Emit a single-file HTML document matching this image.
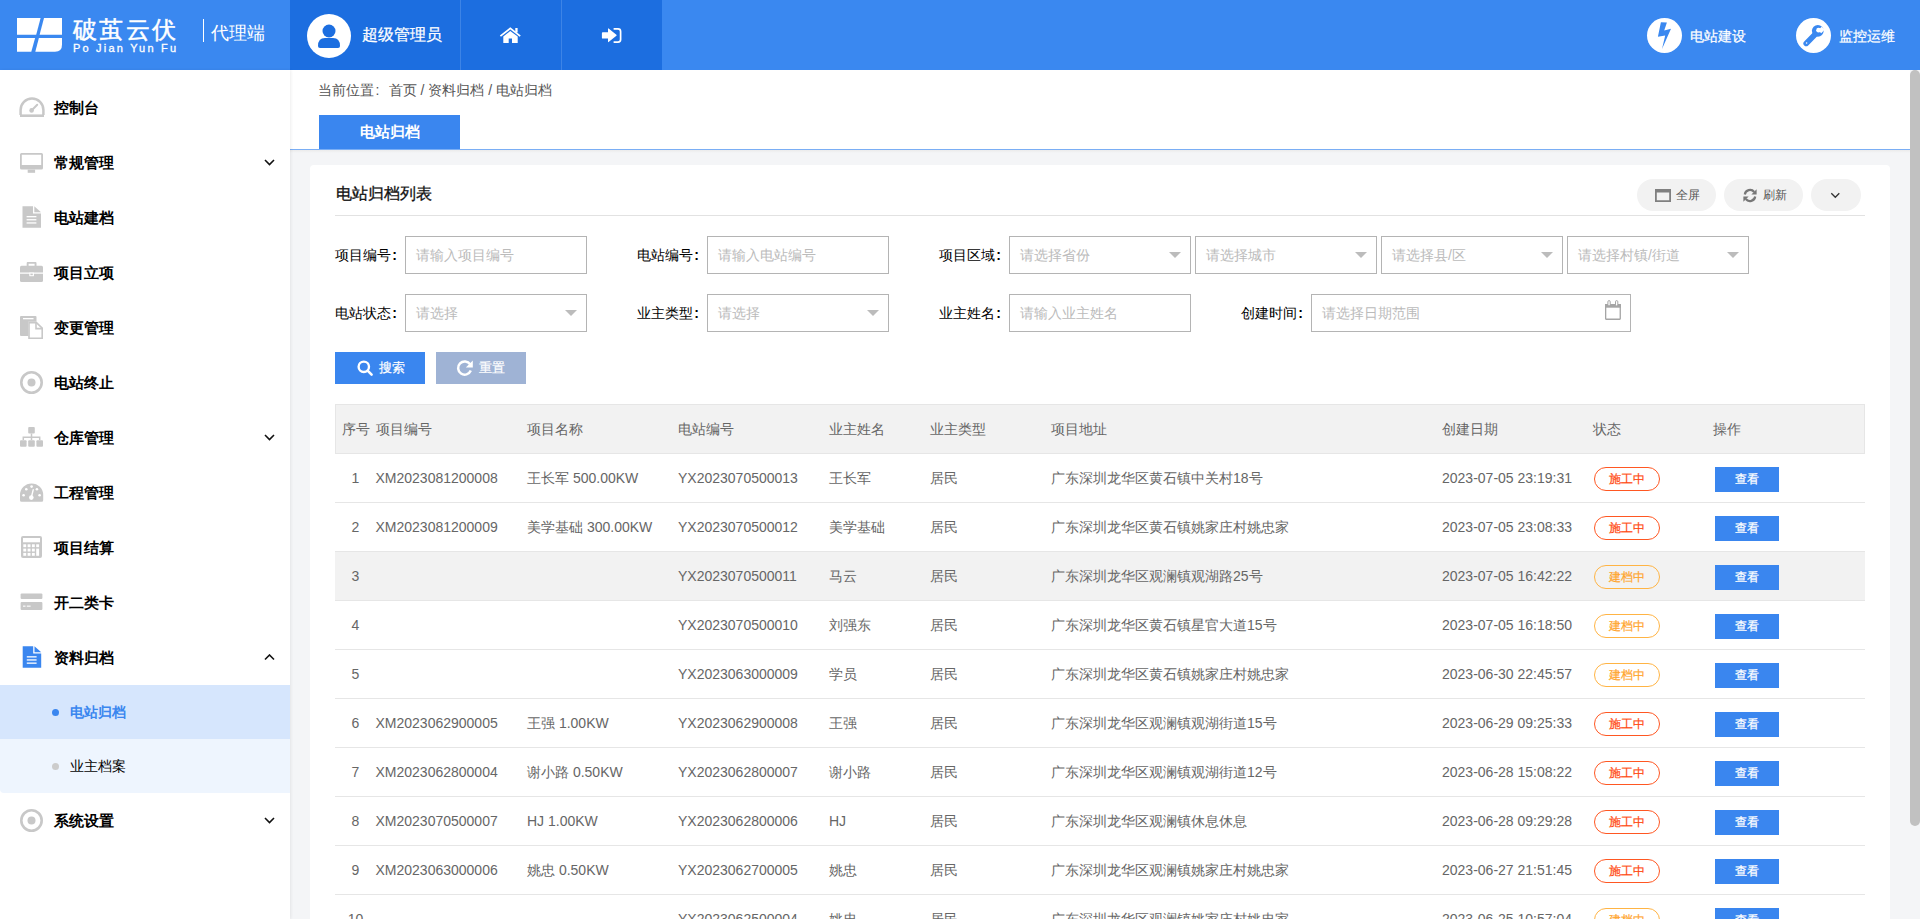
<!DOCTYPE html>
<html><head><meta charset="utf-8">
<style>
*{box-sizing:border-box;margin:0;padding:0}
html,body{width:1920px;height:919px;overflow:hidden;background:#fff;font-family:"Liberation Sans",sans-serif;color:#333}
.abs{position:absolute}
#hdr{position:absolute;left:0;top:0;width:1920px;height:70px;background:#3a88f0}
#user{position:absolute;left:290px;top:0;width:372px;height:70px;background:#1c6ee0}
.vsep{position:absolute;top:0;width:1px;height:70px;background:#3d84e6}
#side{position:absolute;left:0;top:70px;width:290px;height:849px;background:#fff;box-shadow:1px 0 3px rgba(0,0,0,0.07);z-index:2}
.mi{position:absolute;left:0;width:290px;height:55px}
.mi .t{position:absolute;left:53px;top:0;line-height:55px;font-size:15px;font-weight:bold;color:#111}
.mi svg.ic{position:absolute;left:19px}
.mi .chev{position:absolute;left:265px;top:25px}
#main{position:absolute;left:290px;top:70px;width:1630px;height:849px;background:#f4f5f7}
#topw{position:absolute;left:0;top:0;width:1620px;height:80px;background:#fff;border-bottom:1px solid #7aaef5}
.lbl{position:absolute;font-size:14px;color:#000;line-height:38px;height:38px}
.inp{position:absolute;height:38px;border:1px solid #b4b4b4;background:#fff;font-size:14px;color:#bbb;line-height:36px;padding-left:10px}
.inp .arr{position:absolute;right:9.5px;top:14.8px;width:0;height:0;border-left:6.5px solid transparent;border-right:6.5px solid transparent;border-top:6.2px solid #bcbcbc}
.th{position:absolute;top:0;line-height:49px;font-size:14px;color:#666}
.row{position:absolute;left:0;width:1530px;height:49px;border-bottom:1px solid #e6e6e6}
.row .c{position:absolute;top:0;line-height:48px;font-size:14px;color:#666;white-space:nowrap}
.badge{position:absolute;left:1259px;top:13px;width:66px;height:24px;border:1px solid #ff5722;border-radius:12px;color:#ff4a12;-webkit-text-stroke:0.2px currentColor;font-size:12px;line-height:22px;text-align:center}
.badge.y{border-color:#ffb444;color:#ffa52e}
.vbtn{position:absolute;left:1380px;top:13px;width:64px;height:25px;background:#3a86ef;color:#fff;-webkit-text-stroke:0.25px #fff;font-size:12px;line-height:25px;text-align:center}
.pill{position:absolute;top:14px;height:32px;border-radius:16px;background:#f2f2f2;font-size:12px;color:#555;line-height:32px}
</style></head><body>

<!-- HEADER -->
<div id="hdr">
  <svg class="abs" style="left:17px;top:18px" width="46" height="34" viewBox="0 0 46 34">
    <polygon points="0,0 23.6,0 19.2,16.7 0,16.7" fill="#fff"/>
    <polygon points="27,0 45,0 45,16.7 22.6,16.7" fill="#fff"/>
    <polygon points="0,20.1 18.1,20.1 14.3,33.7 0,33.7" fill="#fff"/>
    <path d="M21.9,20.1 L45,20.1 L45,26.7 Q45,33.7 38,33.7 L18.3,33.7 Z" fill="#fff"/>
  </svg>
  <div class="abs" style="left:73px;top:16px;font-size:24px;line-height:28px;color:#fff;letter-spacing:2.4px;font-weight:normal;-webkit-text-stroke:0.5px #fff">破茧云伏</div>
  <div class="abs" style="left:73px;top:43px;font-size:11px;line-height:11px;color:#fff;letter-spacing:2.2px;-webkit-text-stroke:0.3px #fff">Po Jian Yun Fu</div>
  <div class="abs" style="left:203px;top:19px;width:1px;height:23px;background:#fff"></div>
  <div class="abs" style="left:211px;top:21px;font-size:18px;line-height:24px;color:#fff">代理端</div>

  <div id="user">
    <div class="abs" style="left:17px;top:14px;width:44px;height:44px;border-radius:50%;background:#fff"></div>
    <svg class="abs" style="left:17px;top:14px" width="44" height="44" viewBox="0 0 44 44">
      <circle cx="22" cy="17" r="6.5" fill="#1c6ee0"/>
      <path d="M11,32 Q11,24 18,24 L26,24 Q33,24 33,32 Q33,34 31,34 L13,34 Q11,34 11,32Z" fill="#1c6ee0"/>
    </svg>
    <div class="abs" style="left:72px;top:24px;font-size:16px;line-height:22px;color:#fff;-webkit-text-stroke:0.25px #fff">超级管理员</div>
    <div class="vsep" style="left:170px"></div>
    <div class="vsep" style="left:271px"></div>
    <svg class="abs" style="left:209px;top:27px" width="22" height="17" viewBox="0 0 22 17">
      <path d="M1.4,9.1 L11.3,1.4 L21.2,9.1" fill="none" stroke="#fff" stroke-width="1.8"/>
      <rect x="16.3" y="1" width="2.3" height="4.5" fill="#fff"/>
      <path d="M4.3,9.6 L11.3,4 L18.7,9.6 V16 H13 V11.4 H9.7 V16 H4.3 Z" fill="#fff"/>
    </svg>
    <svg class="abs" style="left:311px;top:28px" width="21" height="16" viewBox="0 0 21 16">
      <path d="M1.8,4.3 H7 V0.8 Q7,0.1 7.6,0.5 L15.4,6.8 Q16,7.3 15.4,7.8 L7.6,14.1 Q7,14.5 7,13.8 V10.6 H1.8 Q0.9,10.6 0.9,9.7 V5.2 Q0.9,4.3 1.8,4.3 Z" fill="#fff"/>
      <path d="M12.6,0.95 H17 Q19.6,0.95 19.6,3.5 V11.6 Q19.6,14.15 17,14.15 H12.6" fill="none" stroke="#fff" stroke-width="1.7"/>
    </svg>
  </div>

  <div class="abs" style="left:1647px;top:18px;width:35px;height:35px;border-radius:50%;background:#fff"></div>
  <svg class="abs" style="left:1647px;top:18px" width="35" height="35" viewBox="0 0 35 35">
    <polygon points="13.9,4.2 19.9,4.4 17.2,12.4 24,10.8 15,30.9 18.2,17.4 10.9,18.7" fill="#3a88f0"/>
  </svg>
  <div class="abs" style="left:1690px;top:26px;font-size:14px;line-height:20px;color:#fff;-webkit-text-stroke:0.25px #fff">电站建设</div>

  <div class="abs" style="left:1796px;top:18px;width:35px;height:35px;border-radius:50%;background:#fff"></div>
  <svg class="abs" style="left:1796px;top:18px" width="35" height="35" viewBox="0 0 35 35">
    <path d="M10.2,25.4 L18.5,17.1" stroke="#3a88f0" stroke-width="5.6" stroke-linecap="round"/>
    <circle cx="21.8" cy="12.8" r="5.9" fill="#3a88f0"/>
    <path d="M22.2,12.2 L25.6,8.8 L28.6,11.8 L25.2,15.2 Z" fill="#fff"/>
    <circle cx="22.6" cy="12.2" r="2.4" fill="#fff"/>
    <circle cx="10.6" cy="25" r="0.8" fill="#fff"/>
  </svg>
  <div class="abs" style="left:1839px;top:26px;font-size:14px;line-height:20px;color:#fff;-webkit-text-stroke:0.25px #fff">监控运维</div>
</div>

<!-- SIDEBAR -->
<div id="side">
<svg class="abs" style="left:19px;top:27px" width="26" height="21" viewBox="0 0 26 21">
  <path d="M1.6,18 L1.6,13 A11.4,11.4 0 0 1 24.4,13 L24.4,18" fill="none" stroke="#c8c8c8" stroke-width="2.5"/>
  <rect x="1" y="17.4" width="24" height="2.6" fill="#c8c8c8"/>
  <path d="M12.8,13.2 L18.2,7.8" stroke="#c8c8c8" stroke-width="2" stroke-linecap="round"/>
  <circle cx="12.6" cy="13.4" r="2.3" fill="#c8c8c8"/></svg>
<div class="abs" style="left:54px;top:10px;line-height:55px;font-size:15px;font-weight:bold;color:#000">控制台</div>
<svg class="abs" style="left:20px;top:83px" width="23" height="20" viewBox="0 0 23 20">
  <path fill-rule="evenodd" d="M1.5,0 H21.5 Q23,0 23,1.5 V15 Q23,16.6 21.5,16.6 H1.5 Q0,16.6 0,15 V1.5 Q0,0 1.5,0 Z M1.8,1.8 V12 H21.2 V1.8 Z" fill="#c8c8c8"/>
  <rect x="7.7" y="16.6" width="7.4" height="3.2" fill="#c8c8c8"/></svg>
<div class="abs" style="left:54px;top:65px;line-height:55px;font-size:15px;font-weight:bold;color:#000">常规管理</div>
<svg class="abs" style="left:264px;top:89.0px" width="11" height="7" viewBox="0 0 11 7"><path d="M1,1 L5.5,5.5 L10,1" fill="none" stroke="#111" stroke-width="1.6"/></svg>
<svg class="abs" style="left:22px;top:136px" width="20" height="23" viewBox="0 0 20 23">
  <path d="M0.5,0.3 H11 V7.6 H19 V21.8 H0.5 Z" fill="#c8c8c8"/>
  <path d="M12.3,0.3 L19,6.3 H12.3 Z" fill="#c8c8c8"/>
  <rect x="4.6" y="10" width="9.8" height="1.3" fill="#fff"/>
  <rect x="4.6" y="13.1" width="9.8" height="1.3" fill="#fff"/>
  <rect x="4.6" y="16.3" width="9.8" height="1.3" fill="#fff"/></svg>
<div class="abs" style="left:54px;top:120px;line-height:55px;font-size:15px;font-weight:bold;color:#000">电站建档</div>
<svg class="abs" style="left:20px;top:192px" width="23" height="21" viewBox="0 0 23 21">
  <path fill-rule="evenodd" d="M6.7,4 V1 Q6.7,0 7.7,0 H15.5 Q16.5,0 16.5,1 V4 H14.6 V1.7 H8.6 V4 Z" fill="#c8c8c8"/>
  <path d="M1.5,3.8 H21.5 Q23,3.8 23,5.3 V10.6 H0 V5.3 Q0,3.8 1.5,3.8Z" fill="#c8c8c8"/>
  <path d="M0,11.8 H23 V18.5 Q23,20 21.5,20 H1.5 Q0,20 0,18.5 Z" fill="#c8c8c8"/>
  <rect x="9.3" y="10.6" width="4.6" height="3.6" fill="#fff"/>
  <rect x="10.4" y="11.6" width="2.4" height="1.6" fill="#c8c8c8"/></svg>
<div class="abs" style="left:54px;top:175px;line-height:55px;font-size:15px;font-weight:bold;color:#000">项目立项</div>
<svg class="abs" style="left:20px;top:246px" width="24" height="24" viewBox="0 0 24 24">
  <rect x="0" y="0" width="16.5" height="20" rx="1" fill="#c8c8c8"/>
  <rect x="3" y="2" width="10.5" height="1.3" fill="#fff"/>
  <path d="M8.2,5.8 H16.8 L23,11.8 V23 H8.2 Z" fill="#fff"/>
  <path d="M9,6.6 H16.4 L22.2,12.2 V22.2 H9 Z" fill="none" stroke="#c8c8c8" stroke-width="1.6"/>
  <path d="M16,6.6 V12.6 H22.2" fill="none" stroke="#c8c8c8" stroke-width="1.6"/></svg>
<div class="abs" style="left:54px;top:230px;line-height:55px;font-size:15px;font-weight:bold;color:#000">变更管理</div>
<svg class="abs" style="left:20px;top:301px" width="23" height="23" viewBox="0 0 23 23">
  <circle cx="11.5" cy="11.5" r="10.2" fill="none" stroke="#c8c8c8" stroke-width="2.6"/>
  <circle cx="11.5" cy="11.5" r="4" fill="#c8c8c8"/></svg>
<div class="abs" style="left:54px;top:285px;line-height:55px;font-size:15px;font-weight:bold;color:#000">电站终止</div>
<svg class="abs" style="left:20px;top:357px" width="23" height="20" viewBox="0 0 23 20">
  <rect x="8.2" y="0" width="6.6" height="6.6" rx="1" fill="#c8c8c8"/>
  <path d="M11.5,6.6 V13 M3.3,13 V10.2 H19.7 V13" fill="none" stroke="#c8c8c8" stroke-width="1.5"/>
  <rect x="0" y="13.3" width="6.6" height="6.5" rx="1" fill="#c8c8c8"/>
  <rect x="8.2" y="13.3" width="6.6" height="6.5" rx="1" fill="#c8c8c8"/>
  <rect x="16.4" y="13.3" width="6.6" height="6.5" rx="1" fill="#c8c8c8"/></svg>
<div class="abs" style="left:54px;top:340px;line-height:55px;font-size:15px;font-weight:bold;color:#000">仓库管理</div>
<svg class="abs" style="left:264px;top:364.0px" width="11" height="7" viewBox="0 0 11 7"><path d="M1,1 L5.5,5.5 L10,1" fill="none" stroke="#111" stroke-width="1.6"/></svg>
<svg class="abs" style="left:20px;top:413px" width="24" height="20" viewBox="0 0 24 20">
  <path d="M0,12 A11.6,11.6 0 0 1 23.2,12 V17.3 Q23.2,18.8 21.7,18.8 H1.5 Q0,18.8 0,17.3 Z" fill="#c8c8c8"/>
  <circle cx="3.6" cy="12.3" r="1.3" fill="#fff"/><circle cx="6.3" cy="6.2" r="1.3" fill="#fff"/>
  <circle cx="11.6" cy="3.6" r="1.3" fill="#fff"/><circle cx="16.9" cy="6.2" r="1.3" fill="#fff"/>
  <circle cx="19.6" cy="12.3" r="1.3" fill="#fff"/>
  <path d="M11.3,14.5 L13.2,6.8" stroke="#fff" stroke-width="1.4" stroke-linecap="round"/>
  <circle cx="11.3" cy="14.6" r="2.3" fill="#fff"/></svg>
<div class="abs" style="left:54px;top:395px;line-height:55px;font-size:15px;font-weight:bold;color:#000">工程管理</div>
<svg class="abs" style="left:21px;top:466px" width="22" height="23" viewBox="0 0 22 23">
  <rect x="0" y="0" width="21" height="22" rx="2" fill="#c8c8c8"/>
  <rect x="2" y="2" width="17" height="4.3" fill="#fff"/>
  <rect x="2.3" y="8.3" width="2.9" height="2.9" fill="#fff"/><rect x="6.6" y="8.3" width="2.9" height="2.9" fill="#fff"/><rect x="10.9" y="8.3" width="2.9" height="2.9" fill="#fff"/><rect x="2.3" y="12.6" width="2.9" height="2.9" fill="#fff"/><rect x="6.6" y="12.6" width="2.9" height="2.9" fill="#fff"/><rect x="10.9" y="12.6" width="2.9" height="2.9" fill="#fff"/><rect x="2.3" y="16.9" width="2.9" height="2.9" fill="#fff"/><rect x="6.6" y="16.9" width="2.9" height="2.9" fill="#fff"/><rect x="10.9" y="16.9" width="2.9" height="2.9" fill="#fff"/>
  <rect x="15.2" y="8.3" width="2.9" height="2.9" fill="#fff"/>
  <rect x="15.2" y="12.6" width="2.9" height="7.2" fill="#fff"/></svg>
<div class="abs" style="left:54px;top:450px;line-height:55px;font-size:15px;font-weight:bold;color:#000">项目结算</div>
<svg class="abs" style="left:20px;top:523px" width="23" height="18" viewBox="0 0 23 18">
  <rect x="0.6" y="0.5" width="21.8" height="5.6" rx="1" fill="#c8c8c8"/>
  <rect x="0.6" y="9" width="21.8" height="8" rx="1" fill="#c8c8c8"/>
  <rect x="3" y="12.6" width="2.5" height="1.1" fill="#fff"/>
  <rect x="6.8" y="12.6" width="3.8" height="1.1" fill="#fff"/></svg>
<div class="abs" style="left:54px;top:505px;line-height:55px;font-size:15px;font-weight:bold;color:#000">开二类卡</div>
<svg class="abs" style="left:22px;top:576px" width="20" height="23" viewBox="0 0 20 23">
  <path d="M0.7,0.3 H11.2 V7.6 H19.2 V21.8 H0.7 Z" fill="#3a86ef"/>
  <path d="M12.5,0.3 L19.2,6.3 H12.5 Z" fill="#3a86ef"/>
  <rect x="4.8" y="10.2" width="9.8" height="1.3" fill="#fff"/>
  <rect x="4.8" y="13.3" width="9.8" height="1.3" fill="#fff"/>
  <rect x="4.8" y="16.5" width="9.8" height="1.3" fill="#fff"/></svg>
<div class="abs" style="left:54px;top:560px;line-height:55px;font-size:15px;font-weight:bold;color:#000">资料归档</div>
<svg class="abs" style="left:264px;top:584.0px" width="11" height="7" viewBox="0 0 11 7"><path d="M1,5.5 L5.5,1 L10,5.5" fill="none" stroke="#111" stroke-width="1.6"/></svg>
<div class="abs" style="left:0;top:615px;width:290px;height:54px;background:#d6e6fd"></div>
<div class="abs" style="left:0;top:669px;width:290px;height:54px;background:#eef5fe;border-radius:0 0 0 4px"></div>
<div class="abs" style="left:52px;top:639px;width:7px;height:7px;border-radius:50%;background:#3a86ef"></div>
<div class="abs" style="left:70px;top:615px;line-height:54px;font-size:14px;font-weight:bold;color:#3a86ef">电站归档</div>
<div class="abs" style="left:52px;top:693px;width:7px;height:7px;border-radius:50%;background:#ccc"></div>
<div class="abs" style="left:70px;top:669px;line-height:54px;font-size:14px;color:#000">业主档案</div>
<svg class="abs" style="left:20px;top:739px" width="23" height="23" viewBox="0 0 23 23">
  <circle cx="11.5" cy="11.5" r="10.2" fill="none" stroke="#c8c8c8" stroke-width="2.6"/>
  <circle cx="11.5" cy="11.5" r="4" fill="#c8c8c8"/></svg>
<div class="abs" style="left:54px;top:723px;line-height:55px;font-size:15px;font-weight:bold;color:#000">系统设置</div>
<svg class="abs" style="left:264px;top:747px" width="11" height="7" viewBox="0 0 11 7"><path d="M1,1 L5.5,5.5 L10,1" fill="none" stroke="#111" stroke-width="1.6"/></svg>
</div>

<!-- MAIN -->
<div id="main">
<div id="topw"></div>
<div class="abs" style="left:0;top:80px;width:1620px;height:3px;background:linear-gradient(#ebebeb,#f4f5f7)"></div>
<div class="abs" style="left:28px;top:10px;font-size:14px;line-height:20px;color:#555">当前位置<span style="margin:0 9.2px 0 1.6px">:</span>首页 / 资料归档 / 电站归档</div>
<div class="abs" style="left:29px;top:45px;width:141px;height:34px;background:#3a86ef;color:#fff;font-size:15px;font-weight:bold;text-align:center;line-height:34px">电站归档</div>
<div class="abs" style="left:20px;top:95px;width:1580px;height:900px;background:#fff;border-radius:4px"><div class="abs" style="left:26px;top:18px;font-size:16px;line-height:22px;color:#111;-webkit-text-stroke:0.3px #111">电站归档列表</div>
<div class="abs" style="left:25px;top:50px;width:1530px;height:1px;background:#e2e2e2"></div>
<div class="pill" style="left:1327px;width:79px"><svg class="abs" style="left:18px;top:10px" width="16" height="13" viewBox="0 0 16 13"><path fill-rule="evenodd" d="M0,0 H16 V13 H0 Z M1.8,3.4 V11.2 H14.2 V3.4 Z" fill="#808080"/></svg><span class="abs" style="left:39px;top:0">全屏</span></div>
<div class="pill" style="left:1414px;width:79px"><svg class="abs" style="left:19px;top:9px" width="14" height="15" viewBox="0 0 14 15"><path d="M1.8,6.5 A5.3,5.3 0 0 1 11.2,4" fill="none" stroke="#777" stroke-width="2.2"/><path d="M13.6,1.2 V6.4 H8.4 Z" fill="#777"/><path d="M12.2,8.5 A5.3,5.3 0 0 1 2.8,11" fill="none" stroke="#777" stroke-width="2.2"/><path d="M0.4,13.8 V8.6 H5.6 Z" fill="#777"/></svg><span class="abs" style="left:39px;top:0">刷新</span></div>
<div class="pill" style="left:1501px;width:50px"><svg class="abs" style="left:19px;top:13px" width="11" height="7" viewBox="0 0 11 7"><path d="M1.3,1.3 L5.3,5.3 L9.3,1.3" fill="none" stroke="#333" stroke-width="1.3"/></svg></div>
<div class="lbl" style="left:25px;top:71px">项目编号<b style="margin-left:1.3px">:</b></div>
<div class="inp" style="left:95px;top:71px;width:182px">请输入项目编号</div>
<div class="lbl" style="left:327px;top:71px">电站编号<b style="margin-left:1.3px">:</b></div>
<div class="inp" style="left:397px;top:71px;width:182px">请输入电站编号</div>
<div class="lbl" style="left:629px;top:71px">项目区域<b style="margin-left:1.3px">:</b></div>
<div class="inp" style="left:699px;top:71px;width:182px">请选择省份<span class="arr"></span></div>
<div class="inp" style="left:885px;top:71px;width:182px">请选择城市<span class="arr"></span></div>
<div class="inp" style="left:1071px;top:71px;width:182px">请选择县/区<span class="arr"></span></div>
<div class="inp" style="left:1257px;top:71px;width:182px">请选择村镇/街道<span class="arr"></span></div>
<div class="lbl" style="left:25px;top:129px">电站状态<b style="margin-left:1.3px">:</b></div>
<div class="inp" style="left:95px;top:129px;width:182px">请选择<span class="arr"></span></div>
<div class="lbl" style="left:327px;top:129px">业主类型<b style="margin-left:1.3px">:</b></div>
<div class="inp" style="left:397px;top:129px;width:182px">请选择<span class="arr"></span></div>
<div class="lbl" style="left:629px;top:129px">业主姓名<b style="margin-left:1.3px">:</b></div>
<div class="inp" style="left:699px;top:129px;width:182px">请输入业主姓名</div>
<div class="lbl" style="left:931px;top:129px">创建时间<b style="margin-left:1.3px">:</b></div>
<div class="inp" style="left:1001px;top:129px;width:320px">请选择日期范围<svg class="abs" style="left:292px;top:4px" width="18" height="22" viewBox="0 0 18 22"><rect x="1.65" y="5.65" width="14.6" height="14.6" rx="0.5" fill="none" stroke="#a5a5a5" stroke-width="1.3"/><rect x="1" y="5" width="15.9" height="3.7" fill="#a5a5a5"/><rect x="3.9" y="1.6" width="2.3" height="5.4" rx="1.15" fill="#fff" stroke="#a5a5a5" stroke-width="1"/><rect x="11.5" y="1.6" width="2.3" height="5.4" rx="1.15" fill="#fff" stroke="#a5a5a5" stroke-width="1"/></svg></div>
<div class="abs" style="left:25px;top:187px;width:90px;height:32px;background:#3a86ef;color:#fff;font-size:13px;line-height:31px"><svg class="abs" style="left:22px;top:7.5px" width="17" height="17" viewBox="0 0 17 17"><circle cx="6.8" cy="6.8" r="5.2" fill="none" stroke="#fff" stroke-width="2.4"/><path d="M10.6,10.6 L14.6,14.6" stroke="#fff" stroke-width="2.6" stroke-linecap="round"/></svg><span class="abs" style="left:44px;top:0;-webkit-text-stroke:0.2px #fff">搜索</span></div>
<div class="abs" style="left:126px;top:187px;width:90px;height:32px;background:#9fb3d5;color:#fff;font-size:13px;line-height:31px"><svg class="abs" style="left:20px;top:7px" width="18" height="18" viewBox="0 0 18 18"><path d="M14.2,5.4 A6.6,6.6 0 1 0 14.8,11.6" fill="none" stroke="#fff" stroke-width="2.5"/><path d="M16.8,1.4 V8.4 H9.8 Z" fill="#fff"/></svg><span class="abs" style="left:43px;top:0;-webkit-text-stroke:0.2px #fff">重置</span></div>
<div class="abs" style="left:25px;top:239px;width:1530px;height:700px"><div class="abs" style="left:0;top:0;width:1530px;height:50px;background:#f2f2f2;border:1px solid #e6e6e6"></div>
<div class="th" style="left:0;width:41px;text-align:center;line-height:50px">序号</div>
<div class="th" style="left:40.5px;line-height:50px">项目编号</div>
<div class="th" style="left:192px;line-height:50px">项目名称</div>
<div class="th" style="left:343px;line-height:50px">电站编号</div>
<div class="th" style="left:494px;line-height:50px">业主姓名</div>
<div class="th" style="left:595px;line-height:50px">业主类型</div>
<div class="th" style="left:716px;line-height:50px">项目地址</div>
<div class="th" style="left:1107px;line-height:50px">创建日期</div>
<div class="th" style="left:1258px;line-height:50px">状态</div>
<div class="th" style="left:1378px;line-height:50px">操作</div>
<div class="row" style="top:50px;"><div class="c" style="left:0;width:41px;text-align:center">1</div><div class="c" style="left:40.5px">XM2023081200008</div><div class="c" style="left:192px">王长军 500.00KW</div><div class="c" style="left:343px">YX2023070500013</div><div class="c" style="left:494px">王长军</div><div class="c" style="left:595px">居民</div><div class="c" style="left:716px">广东深圳龙华区黄石镇中关村18号</div><div class="c" style="left:1107px">2023-07-05 23:19:31</div><div class="badge">施工中</div><div class="vbtn">查看</div></div>
<div class="row" style="top:99px;"><div class="c" style="left:0;width:41px;text-align:center">2</div><div class="c" style="left:40.5px">XM2023081200009</div><div class="c" style="left:192px">美学基础 300.00KW</div><div class="c" style="left:343px">YX2023070500012</div><div class="c" style="left:494px">美学基础</div><div class="c" style="left:595px">居民</div><div class="c" style="left:716px">广东深圳龙华区黄石镇姚家庄村姚忠家</div><div class="c" style="left:1107px">2023-07-05 23:08:33</div><div class="badge">施工中</div><div class="vbtn">查看</div></div>
<div class="row" style="top:148px;background:#f2f2f2;"><div class="c" style="left:0;width:41px;text-align:center">3</div><div class="c" style="left:40.5px"></div><div class="c" style="left:192px"></div><div class="c" style="left:343px">YX2023070500011</div><div class="c" style="left:494px">马云</div><div class="c" style="left:595px">居民</div><div class="c" style="left:716px">广东深圳龙华区观澜镇观湖路25号</div><div class="c" style="left:1107px">2023-07-05 16:42:22</div><div class="badge y">建档中</div><div class="vbtn">查看</div></div>
<div class="row" style="top:197px;"><div class="c" style="left:0;width:41px;text-align:center">4</div><div class="c" style="left:40.5px"></div><div class="c" style="left:192px"></div><div class="c" style="left:343px">YX2023070500010</div><div class="c" style="left:494px">刘强东</div><div class="c" style="left:595px">居民</div><div class="c" style="left:716px">广东深圳龙华区黄石镇星官大道15号</div><div class="c" style="left:1107px">2023-07-05 16:18:50</div><div class="badge y">建档中</div><div class="vbtn">查看</div></div>
<div class="row" style="top:246px;"><div class="c" style="left:0;width:41px;text-align:center">5</div><div class="c" style="left:40.5px"></div><div class="c" style="left:192px"></div><div class="c" style="left:343px">YX2023063000009</div><div class="c" style="left:494px">学员</div><div class="c" style="left:595px">居民</div><div class="c" style="left:716px">广东深圳龙华区黄石镇姚家庄村姚忠家</div><div class="c" style="left:1107px">2023-06-30 22:45:57</div><div class="badge y">建档中</div><div class="vbtn">查看</div></div>
<div class="row" style="top:295px;"><div class="c" style="left:0;width:41px;text-align:center">6</div><div class="c" style="left:40.5px">XM2023062900005</div><div class="c" style="left:192px">王强 1.00KW</div><div class="c" style="left:343px">YX2023062900008</div><div class="c" style="left:494px">王强</div><div class="c" style="left:595px">居民</div><div class="c" style="left:716px">广东深圳龙华区观澜镇观湖街道15号</div><div class="c" style="left:1107px">2023-06-29 09:25:33</div><div class="badge">施工中</div><div class="vbtn">查看</div></div>
<div class="row" style="top:344px;"><div class="c" style="left:0;width:41px;text-align:center">7</div><div class="c" style="left:40.5px">XM2023062800004</div><div class="c" style="left:192px">谢小路 0.50KW</div><div class="c" style="left:343px">YX2023062800007</div><div class="c" style="left:494px">谢小路</div><div class="c" style="left:595px">居民</div><div class="c" style="left:716px">广东深圳龙华区观澜镇观湖街道12号</div><div class="c" style="left:1107px">2023-06-28 15:08:22</div><div class="badge">施工中</div><div class="vbtn">查看</div></div>
<div class="row" style="top:393px;"><div class="c" style="left:0;width:41px;text-align:center">8</div><div class="c" style="left:40.5px">XM2023070500007</div><div class="c" style="left:192px">HJ 1.00KW</div><div class="c" style="left:343px">YX2023062800006</div><div class="c" style="left:494px">HJ</div><div class="c" style="left:595px">居民</div><div class="c" style="left:716px">广东深圳龙华区观澜镇休息休息</div><div class="c" style="left:1107px">2023-06-28 09:29:28</div><div class="badge">施工中</div><div class="vbtn">查看</div></div>
<div class="row" style="top:442px;"><div class="c" style="left:0;width:41px;text-align:center">9</div><div class="c" style="left:40.5px">XM2023063000006</div><div class="c" style="left:192px">姚忠 0.50KW</div><div class="c" style="left:343px">YX2023062700005</div><div class="c" style="left:494px">姚忠</div><div class="c" style="left:595px">居民</div><div class="c" style="left:716px">广东深圳龙华区观澜镇姚家庄村姚忠家</div><div class="c" style="left:1107px">2023-06-27 21:51:45</div><div class="badge">施工中</div><div class="vbtn">查看</div></div>
<div class="row" style="top:491px;"><div class="c" style="left:0;width:41px;text-align:center">10</div><div class="c" style="left:40.5px"></div><div class="c" style="left:192px"></div><div class="c" style="left:343px">YX2023062500004</div><div class="c" style="left:494px">姚忠</div><div class="c" style="left:595px">居民</div><div class="c" style="left:716px">广东深圳龙华区观澜镇姚家庄村姚忠家</div><div class="c" style="left:1107px">2023-06-25 10:57:04</div><div class="badge y">建档中</div><div class="vbtn">查看</div></div></div></div>
</div>

<!-- scrollbar -->
<div class="abs" style="left:1910px;top:70px;width:10px;height:756px;border-radius:5px;background:#c1c1c1"></div>
</body></html>
